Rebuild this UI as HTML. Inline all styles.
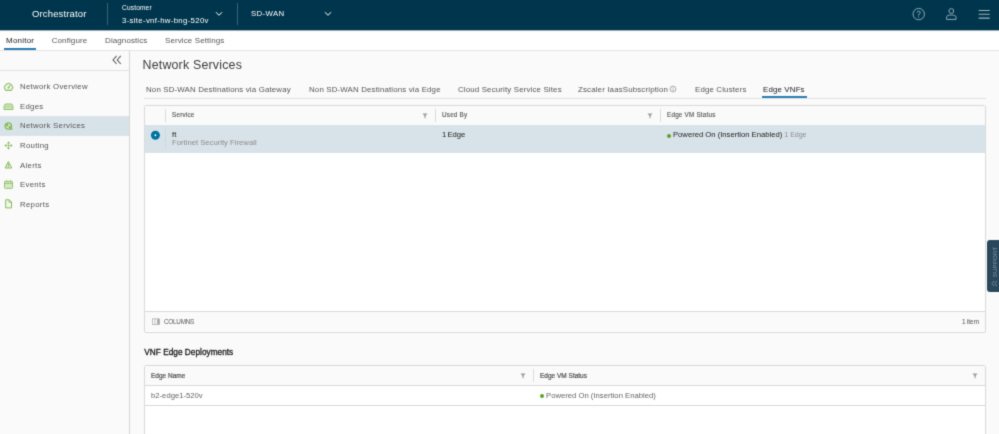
<!DOCTYPE html>
<html><head><meta charset="utf-8">
<style>
*{box-sizing:border-box;margin:0;padding:0}
html,body{width:999px;height:434px;overflow:hidden;background:#fafafa;font-family:"Liberation Sans",sans-serif;color:#565656;}
.a{position:absolute}
.t{position:absolute;white-space:nowrap;line-height:1}
#hdr{position:absolute;left:0;top:0;width:999px;height:30px;}
#hdr .t{color:#fff}
#hdr .sep{position:absolute;top:3px;width:1px;height:22px;background:#39606f}
.tab{font-size:8px;color:#565656;letter-spacing:0.1px;margin-top:0.2px}
.nav{font-size:7.8px;color:#565656;left:20px;letter-spacing:0.29px;margin-top:0.3px}
.ic{position:absolute;left:3px;width:11px;height:11px;overflow:visible}
.st{top:85.2px;transform:translateY(0.5px);letter-spacing:0.15px;font-size:7.9px;color:#565656}
.th{font-size:6.3px;font-weight:normal;color:#5c5c5c;-webkit-text-stroke:0.16px #5c5c5c;letter-spacing:0.22px;margin-top:0.2px}
.th2{font-size:6.5px;font-weight:normal;color:#555;-webkit-text-stroke:0.22px #555;letter-spacing:0px;margin-top:1.1px}
.vs{position:absolute;width:1px;background:#dcdcdc}
.c{font-size:7.7px;margin-top:0.1px}
.gb{position:absolute;background:#fff;border:1px solid #d9d9d9;border-radius:2px}
</style></head><body><svg width="0" height="0" style="position:absolute"><filter id="soft" x="-2%" y="-5%" width="104%" height="110%" color-interpolation-filters="sRGB"><feConvolveMatrix order="3" kernelMatrix="0.0196 0.1008 0.0196 0.1008 0.5184 0.1008 0.0196 0.1008 0.0196" divisor="1" edgeMode="duplicate" preserveAlpha="false"/></filter></svg><div id="wrap" style="position:absolute;left:0;top:0;width:999px;height:434px;filter:url(#soft)">
<!-- header -->
<div class="a" style="left:-12px;top:-12px;width:1023px;height:42px;background:#00364d"></div>
<div id="hdr">
 <div class="t" style="left:32px;top:9px;font-size:9.5px;letter-spacing:0.15px">Orchestrator</div>
 <div class="sep" style="left:107px"></div>
 <div class="t" style="left:122px;top:5px;font-size:6.6px;letter-spacing:0.15px">Customer</div>
 <div class="t" style="left:122px;top:16.7px;font-size:7.8px;letter-spacing:0.32px">3-site-vnf-hw-bng-520v</div>
 <svg class="a" style="left:215px;top:11px" width="8" height="6" viewBox="0 0 8 6"><path d="M1 1.2 L4 4.3 L7 1.2" fill="none" stroke="#fff" stroke-width="1"/></svg>
 <div class="sep" style="left:237px"></div>
 <div class="t" style="left:251px;top:10px;font-size:7.8px;letter-spacing:0.38px">SD-WAN</div>
 <svg class="a" style="left:324px;top:11px" width="8" height="6" viewBox="0 0 8 6"><path d="M1 1.2 L4 4.3 L7 1.2" fill="none" stroke="#fff" stroke-width="1"/></svg>
 <svg class="a" style="left:911px;top:7px" width="15" height="15" viewBox="0 0 15 15"><circle cx="7.7" cy="7.1" r="5.7" fill="none" stroke="#9db2bd" stroke-width="0.9"/><path d="M6.1 5.6 Q6.1 4.2 7.7 4.2 Q9.3 4.2 9.3 5.6 Q9.3 6.6 7.7 7.3 V8.6" fill="none" stroke="#9db2bd" stroke-width="0.9"/><circle cx="7.7" cy="10.1" r="0.6" fill="#9db2bd"/></svg>
 <svg class="a" style="left:944px;top:7px" width="15" height="15" viewBox="0 0 15 15"><circle cx="7.3" cy="4" r="2.4" fill="none" stroke="#9db2bd" stroke-width="0.9"/><path d="M2.6 12.4 V10.2 Q2.6 8 7.3 8 Q12 8 12 10.2 V12.4 Z" fill="none" stroke="#9db2bd" stroke-width="0.9" stroke-linejoin="round"/></svg>
 <svg class="a" style="left:978px;top:8px" width="12" height="12" viewBox="0 0 12 12"><path d="M0.7 2.5 H11.7 M0.7 6.3 H11.7 M0.7 10.1 H11.7" stroke="#9db2bd" stroke-width="1.1"/></svg>
</div>
<div class="a" style="left:-12px;top:30px;width:1023px;height:1px;background:#99afb8;z-index:2"></div>
<!-- top tabs -->
<div class="a" style="left:-12px;top:30px;width:1023px;height:20px;background:#fff"></div>
<div class="a" style="left:-12px;top:50px;width:1023px;height:1px;background:#e4e4e4"></div>
<div class="t tab" style="left:6px;top:37px;color:#222;letter-spacing:0.22px">Monitor</div>
<div class="t tab" style="left:51.7px;top:37px">Configure</div>
<div class="t tab" style="left:105px;top:37px">Diagnostics</div>
<div class="t tab" style="left:165px;top:37px">Service Settings</div>
<div class="a" style="left:4px;top:48px;width:32px;height:2px;background:#2a7fb4"></div>
<!-- sidebar -->
<div class="a" style="left:128.5px;top:51px;width:1px;height:395px;background:#d6d6d6"></div>
<svg class="a" style="left:111px;top:55px" width="11" height="10" viewBox="0 0 11 10"><path d="M5.6 0.8 L2 4.9 L5.6 9 M9.8 0.8 L6.2 4.9 L9.8 9" fill="none" stroke="#5e5e5e" stroke-width="1.05"/></svg>
<div class="a" style="left:-12px;top:70px;width:141px;height:1px;background:#e4e4e4"></div>
<div class="a" style="left:-12px;top:116px;width:141px;height:20px;background:#d8e3e9"></div>
<div class="t nav" style="top:83px">Network Overview</div>
<div class="t nav" style="top:103px">Edges</div>
<div class="t nav" style="top:122px">Network Services</div>
<div class="t nav" style="top:142px">Routing</div>
<div class="t nav" style="top:161.6px">Alerts</div>
<div class="t nav" style="top:181px">Events</div>
<div class="t nav" style="top:200.6px">Reports</div>
<!-- sidebar icons -->
<svg class="ic" style="top:81px" viewBox="0 0 11 11"><path d="M2.6 9.3 A4.05 4.05 0 1 1 8.5 9.3 Z" fill="#edf5e6" stroke="#6aab37" stroke-width="0.9" stroke-linejoin="round"/><path d="M5.5 6.6 L7.2 4.2" stroke="#6aab37" stroke-width="0.9"/><circle cx="5.5" cy="6.7" r="0.8" fill="#6aab37"/></svg>
<svg class="ic" style="top:101px" viewBox="0 0 11 11"><path d="M1 8.5 V5.5 L2.2 3 H8.8 L10 5.5 V8.5 Z" fill="#cfe4bd" stroke="#8cbf64" stroke-width="0.9" stroke-linejoin="round"/><path d="M1 5.8 H10" stroke="#a5cd86" stroke-width="0.8"/></svg>
<svg class="ic" style="top:120px" viewBox="0 0 11 11"><circle cx="5.3" cy="6" r="3.4" fill="#c5dcb6" stroke="#6aab37" stroke-width="0.9"/><path d="M3.2 4.4 Q4.6 3.4 5.3 4.8 Q4.7 6.4 3.4 6 Z M5.9 6.4 Q7.6 5.9 8.1 7.2 Q7.3 8.8 6.1 8.1 Z" fill="#6aab37"/><circle cx="8" cy="8.5" r="1.5" fill="#8cbf64"/></svg>
<svg class="ic" style="top:140px" viewBox="0 0 11 11"><path d="M5.5 1.5 L7 3.4 H4 Z M5.5 9.5 L7 7.6 H4 Z M1.5 5.5 L3.4 4 V7 Z M9.5 5.5 L7.6 4 V7 Z" fill="#6aab37"/><circle cx="5.5" cy="5.5" r="0.95" fill="#6aab37"/></svg>
<svg class="ic" style="top:159px" viewBox="0 0 11 11"><path d="M5.4 2.6 L8.7 9 H2.1 Z" fill="#e3efd9" stroke="#7ab54c" stroke-width="0.9" stroke-linejoin="round"/><path d="M5.4 4.8 V6.7" stroke="#6aab37" stroke-width="0.9"/><circle cx="5.4" cy="7.8" r="0.5" fill="#6aab37"/></svg>
<svg class="ic" style="top:179px" viewBox="0 0 11 11"><rect x="1.5" y="2.3" width="8" height="7.1" rx="0.8" fill="#d6e8c8" stroke="#8cbf64" stroke-width="0.9"/><path d="M1.5 4.3 H9.5 M3.5 1.3 V2.8 M7.5 1.3 V2.8" stroke="#8cbf64" stroke-width="0.9"/></svg>
<svg class="ic" style="top:198px" viewBox="0 0 11 11"><path d="M2.7 1.8 H6.3 L8.5 4.1 V9.9 H2.7 Z" fill="#f1f7ec" stroke="#7ab54c" stroke-width="0.9" stroke-linejoin="round"/><path d="M6.1 2 V4.3 H8.3" fill="none" stroke="#7ab54c" stroke-width="0.8"/></svg>
<!-- title -->
<div class="t" style="left:142.5px;top:59px;font-size:12.4px;color:#3c3c3c;letter-spacing:0.2px">Network Services</div>
<!-- sub tabs -->
<div class="t st" style="left:146px">Non SD-WAN Destinations via Gateway</div>
<div class="t st" style="left:309px">Non SD-WAN Destinations via Edge</div>
<div class="t st" style="left:458px">Cloud Security Service Sites</div>
<div class="t st" style="left:578px">Zscaler IaasSubscription</div>
<svg class="a" style="left:669px;top:85px" width="8" height="8" viewBox="0 0 8 8"><circle cx="4" cy="4" r="2.9" fill="none" stroke="#777" stroke-width="0.6"/><path d="M4 3.6 V5.6" stroke="#777" stroke-width="0.7"/><circle cx="4" cy="2.5" r="0.4" fill="#777"/></svg>
<div class="t st" style="left:695px">Edge Clusters</div>
<div class="t st" style="left:763px;color:#222">Edge VNFs</div>
<div class="a" style="left:144px;top:98px;width:842px;height:1px;background:#e2e2e2"></div>
<div class="a" style="left:761.5px;top:96px;width:45px;height:2px;background:#2a7fb4"></div>

<!-- grid 1 -->
<div class="gb" style="left:144px;top:105px;width:842px;height:227.5px"></div>
<div class="a" style="left:145px;top:106px;width:840px;height:19px;background:#fafafa"></div>
<div class="a" style="left:145px;top:125px;width:840px;height:28px;background:#d8e3e9"></div>
<div class="vs" style="left:165px;top:109px;height:13px"></div>
<div class="vs" style="left:165px;top:128px;height:21px;background:#cdd9df"></div>
<div class="t th" style="left:172px;top:112px">Service</div>
<div class="vs" style="left:435px;top:109px;height:13px"></div>
<div class="t th" style="left:442px;top:112px">Used By</div>
<div class="vs" style="left:660px;top:109px;height:13px"></div>
<div class="t th" style="left:667px;top:112px">Edge VM Status</div>
<svg class="a" style="left:422px;top:113px" width="6" height="6" viewBox="0 0 6 6"><path d="M0.5 0.6 H5.5 L3.6 3 V5.4 L2.4 4.8 V3 Z" fill="#9c9c9c"/></svg>
<svg class="a" style="left:647px;top:113px" width="6" height="6" viewBox="0 0 6 6"><path d="M0.5 0.6 H5.5 L3.6 3 V5.4 L2.4 4.8 V3 Z" fill="#9c9c9c"/></svg>
<svg class="a" style="left:150px;top:130px" width="11" height="11" viewBox="0 0 11 11"><circle cx="5.4" cy="5.3" r="4.5" fill="#0072a3"/><circle cx="5.4" cy="5.3" r="0.95" fill="#fff"/></svg>
<div class="t c" style="left:172px;top:131px;color:#222">ft</div>
<div class="t c" style="left:172px;top:139px;color:#8c8c8c">Fortinet Security Firewall</div>
<div class="t c" style="left:442px;top:131px;color:#222;word-spacing:-0.8px;letter-spacing:-0.05px">1 Edge</div>
<div class="a" style="left:667px;top:133.5px;width:4px;height:4px;border-radius:50%;background:#5aa220"></div>
<div class="t c" style="left:673px;top:131px;color:#222;letter-spacing:-0.02px">Powered On (Insertion Enabled) <span style="color:#8c8c8c;font-size:7px">1 Edge</span></div>
<div class="a" style="left:145px;top:311px;width:840px;height:1px;background:#d9d9d9"></div>
<div class="a" style="left:145px;top:312px;width:840px;height:19px;background:#fafafa"></div>
<svg class="a" style="left:152px;top:317.7px" width="9" height="8" viewBox="0 0 9 8"><rect x="0.6" y="0.9" width="6.9" height="5.6" fill="none" stroke="#9a9a9a" stroke-width="0.6"/><path d="M3 0.9 V6.5" stroke="#9a9a9a" stroke-width="0.6"/><rect x="5.2" y="0.9" width="2.3" height="5.6" fill="#a6a6a6"/></svg>
<div class="t" style="left:164px;top:318.7px;font-size:6.3px;letter-spacing:-0.2px;color:#565656">COLUMNS</div>
<div class="t" style="left:962px;top:319.2px;font-size:6.4px;color:#505050;word-spacing:-0.5px;letter-spacing:0.02px">1 item</div>

<!-- section 2 -->
<div class="t" style="left:144.3px;top:349px;font-size:8.25px;color:#1c1c1c;-webkit-text-stroke:0.3px #1c1c1c;letter-spacing:0.02px">VNF Edge Deployments</div>
<div class="gb" style="left:144px;top:365px;width:842px;height:80px"></div>
<div class="a" style="left:145px;top:366px;width:840px;height:19px;background:#fafafa"></div>
<div class="a" style="left:145px;top:385px;width:840px;height:1px;background:#d9d9d9"></div>
<div class="a" style="left:145px;top:405px;width:840px;height:1px;background:#d9d9d9"></div>
<div class="t th2" style="left:151px;top:372px">Edge Name</div>
<div class="vs" style="left:533px;top:369px;height:13px"></div>
<div class="t th2" style="left:540px;top:372px">Edge VM Status</div>
<svg class="a" style="left:520px;top:373px" width="6" height="6" viewBox="0 0 6 6"><path d="M0.5 0.6 H5.5 L3.6 3 V5.4 L2.4 4.8 V3 Z" fill="#9c9c9c"/></svg>
<svg class="a" style="left:972px;top:373px" width="6" height="6" viewBox="0 0 6 6"><path d="M0.5 0.6 H5.5 L3.6 3 V5.4 L2.4 4.8 V3 Z" fill="#9c9c9c"/></svg>
<div class="t c" style="left:151px;top:391.8px;color:#666">b2-edge1-520v</div>
<div class="a" style="left:540px;top:393.5px;width:4px;height:4px;border-radius:50%;background:#5aa220"></div>
<div class="t c" style="left:546px;top:391.8px;color:#666">Powered On (Insertion Enabled)</div>

<!-- support tab -->
<div class="a" style="left:987px;top:240px;width:26px;height:52px;background:#29485c;border-radius:3px 0 0 3px"></div>
<div class="t" style="left:995px;top:261.5px;font-size:6.2px;color:#8299a7;transform:translate(-50%,-50%) rotate(-90deg);letter-spacing:0.1px">SUPPORT</div>
<svg class="a" style="left:991px;top:280px" width="7" height="7" viewBox="0 0 7 7"><path d="M3.2 0.8 L1 3.5 L3.2 6.2 M6 0.8 L3.8 3.5 L6 6.2" fill="none" stroke="#8da2af" stroke-width="0.7"/></svg>
</div></body></html>
